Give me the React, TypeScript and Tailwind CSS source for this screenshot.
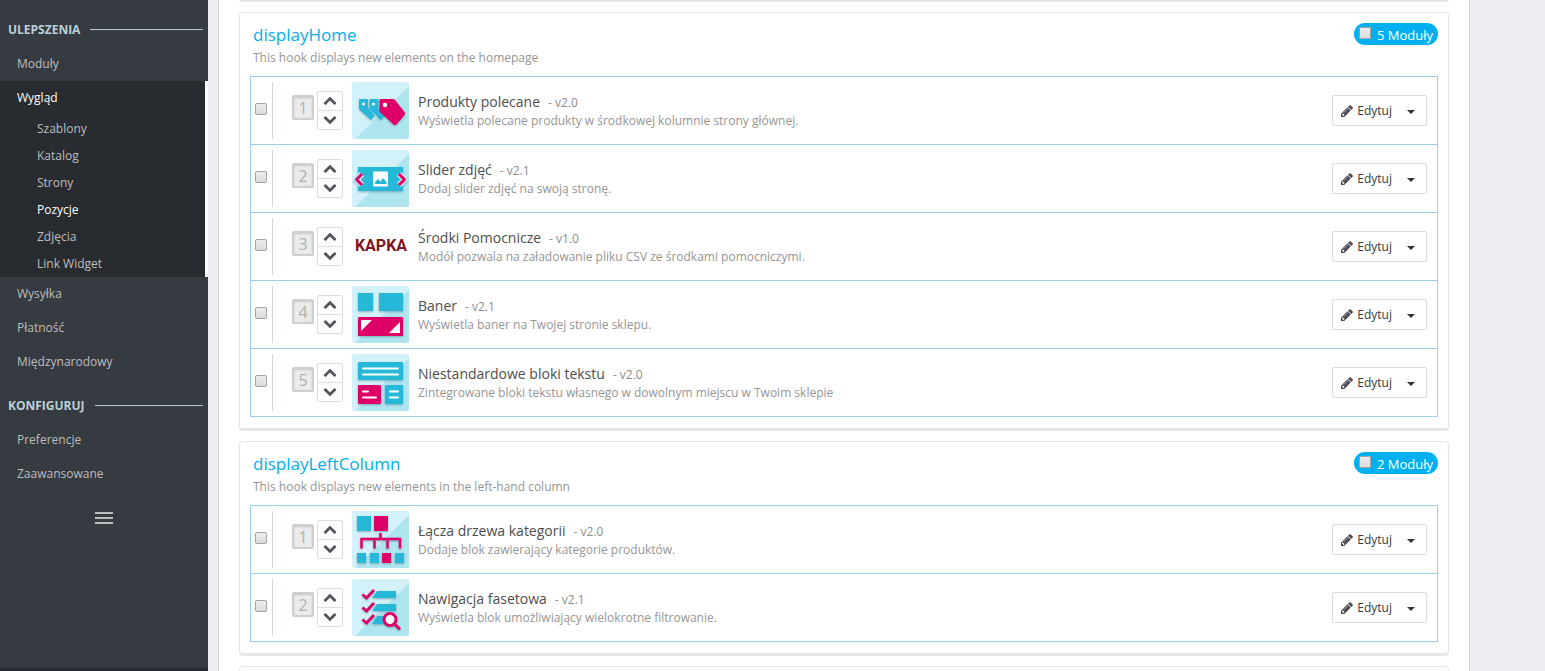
import { ReactNode } from "react";
import clsx from "clsx";

type IconName = "tags" | "slider" | "kapka" | "banner" | "blocks" | "tree" | "facets";

interface Module {
    name: string;
    version: string;
    description: string;
    icon: IconName;
}

interface Hook {
    name: string;
    description: string;
    modules: Module[];
}

const hooks: Hook[] = [
    {
        name: "displayHome",
        description: "This hook displays new elements on the homepage",
        modules: [
            {
                name: "Produkty polecane",
                version: "v2.0",
                description: "Wyświetla polecane produkty w środkowej kolumnie strony głównej.",
                icon: "tags",
            },
            {
                name: "Slider zdjęć",
                version: "v2.1",
                description: "Dodaj slider zdjęć na swoją stronę.",
                icon: "slider",
            },
            {
                name: "Środki Pomocnicze",
                version: "v1.0",
                description: "Modół pozwala na załadowanie pliku CSV ze środkami pomocniczymi.",
                icon: "kapka",
            },
            {
                name: "Baner",
                version: "v2.1",
                description: "Wyświetla baner na Twojej stronie sklepu.",
                icon: "banner",
            },
            {
                name: "Niestandardowe bloki tekstu",
                version: "v2.0",
                description: "Zintegrowane bloki tekstu własnego w dowolnym miejscu w Twoim sklepie",
                icon: "blocks",
            },
        ],
    },
    {
        name: "displayLeftColumn",
        description: "This hook displays new elements in the left-hand column",
        modules: [
            {
                name: "Łącza drzewa kategorii",
                version: "v2.0",
                description: "Dodaje blok zawierający kategorie produktów.",
                icon: "tree",
            },
            {
                name: "Nawigacja fasetowa",
                version: "v2.1",
                description: "Wyświetla blok umożliwiający wielokrotne filtrowanie.",
                icon: "facets",
            },
        ],
    },
];

const appearanceLinks = ["Szablony", "Katalog", "Strony", "Pozycje", "Zdjęcia", "Link Widget"];

const CYAN = "#25b9d7";
const PINK = "#df0067";

const iconArt: Record<Exclude<IconName, "kapka">, ReactNode> = {
    tags: (
        <>
            <g fill={CYAN}>
                <path d="M8 17h7q1 0 1 1v7.500l6.500 8-3.500 4.500L8 28q-1-1-1-2v-8q0-1 1-1z" />
                <path d="M18.500 17h7q1 0 1 1v7.500l6 8-3.500 4.500-10.500-10q-1-1-1-2v-8q0-1 1-1z" />
            </g>
            <path
                d="M29 17h12q1 0 2 1l9.500 12q1 2 0 3l-8 9.500q-2 1-3 0L29 31q-1.500-1-1.500-2V18q0-1 1.500-1z"
                fill={PINK}
            />
            <g fill="#fff">
                <circle cx="11.500" cy="22" r="1.500" />
                <circle cx="21.500" cy="22" r="1.500" />
                <circle cx="33" cy="23" r="2.200" />
            </g>
        </>
    ),
    slider: (
        <>
            <path
                d="M6 17h45v7q-4 0-4 3l3 2.500-3 2.500q0 3 4 3v6H6v-6q5 0 5-3l-3-2.500 3-2.500q0-3-5-3z"
                fill={CYAN}
            />
            <rect x="21" y="21.500" width="15" height="15" rx="1" fill="#fff" />
            <path d="M23 34v-2l3-3 2.500 2.500L31 28l3.500 4v2z" fill={CYAN} />
            <g fill="none" strokeLinejoin="round">
                <path d="M10 24l-5.500 5.500L10 35M47 24l5.500 5.500L47 35" stroke="#c5ecf5" strokeWidth="6" />
                <path d="M10 24l-5.500 5.500L10 35M47 24l5.500 5.500L47 35" stroke={PINK} strokeWidth="3" />
            </g>
        </>
    ),
    banner: (
        <>
            <path d="M6 7h15v18H6zM27 7h24v18H27z" fill={CYAN} />
            <rect x="6" y="31" width="45" height="19" rx="1" fill={PINK} />
            <path d="M9 34h11L9 45zM48 36v11H37z" fill="#fff" />
        </>
    ),
    blocks: (
        <>
            <rect x="6" y="8" width="45" height="18" rx="1" fill={CYAN} />
            <rect x="6" y="31" width="23" height="19" rx="1" fill={PINK} />
            <rect x="33" y="31" width="18" height="19" rx="1" fill={CYAN} />
            <path
                d="M11 14.500h35M11 20.500h35M11 37.500h5M11 43.500h13M38 37.500h8M38 43.500h8"
                stroke="#fff"
                strokeWidth="2"
                strokeLinecap="round"
            />
        </>
    ),
    tree: (
        <>
            <path d="M5 5h14v15H5zM5 42h9v10H5zM18 42h9v10h-9zM43 42h9v10h-9z" fill={CYAN} />
            <path d="M22 5h14v15H22zM30 42h9v10h-9z" fill={PINK} />
            <path
                d="M28.500 22v6M9.500 37.500V28H48v9.500M22.500 28v9.500M35.500 28v9.500"
                fill="none"
                stroke={PINK}
                strokeWidth="2.500"
            />
        </>
    ),
    facets: (
        <>
            <path d="M25 12h19v7H20zM25 25h19v7H20zM25 37h8v8H20z" fill={CYAN} />
            <path
                d="M10.500 15.500l4 3.500L22 11M10.500 28.500l4 3.500L22 24M10.500 40.500l4 3.500L22 36"
                fill="none"
                stroke={PINK}
                strokeWidth="2.800"
            />
            <circle cx="38" cy="40.500" r="6" fill="#fff" stroke={PINK} strokeWidth="3" />
            <path d="M42.500 45l5.500 5.500" stroke={PINK} strokeWidth="3" />
        </>
    ),
};

function ModuleIcon({ icon }: { icon: IconName }) {
    if (icon === "kapka") {
        return (
            <svg viewBox="0 0 57 57" className="size-[57px] shrink-0" role="img">
                <text
                    x="29"
                    y="33"
                    textAnchor="middle"
                    fontSize="16"
                    fontWeight="700"
                    fill="#7d1420"
                    fontFamily="Roboto, sans-serif">
                    KAPKA
                </text>
            </svg>
        );
    }
    return (
        <svg viewBox="0 0 57 57" className="size-[57px] shrink-0 rounded-xs" aria-hidden="true">
            <path d="M0 0h57v57H0z" fill="#d3f1f8" />
            <path d="M57 4v53H3z" fill="#afe5f1" />
            <g className="drop-shadow-[0_1px_1px_rgba(0,60,80,0.35)]">{iconArt[icon]}</g>
        </svg>
    );
}

function Chevron({ up }: { up?: boolean }) {
    return (
        <svg viewBox="0 0 1792 1792" className="mb-0.5 size-3.5 fill-[#54545c]" aria-hidden="true">
            {up ? (
                <path d="M1683 1331l-166 165q-19 19-45 19t-45-19l-531-531-531 531q-19 19-45 19t-45-19l-166-165q-19-19-19-45.500t19-45.500l742-741q19-19 45-19t45 19l742 741q19 19 19 45.500t-19 45.500z" />
            ) : (
                <path d="M1683 808l-742 741q-19 19-45 19t-45-19l-742-741q-19-19-19-45.500t19-45.500l166-165q19-19 45-19t45 19l531 531 531-531q19-19 45-19t45 19l166 165q19 19 19 45.500t-19 45.500z" />
            )}
        </svg>
    );
}

function PencilIcon() {
    return (
        <svg viewBox="0 0 1536 1536" className="size-3 fill-[#4a4a50]" aria-hidden="true">
            <path d="M363 1408l91-91-235-235-91 91v107h128v128h107zM886 480q0-22-22-22-10 0-17 7l-542 542q-7 7-7 17 0 22 22 22 10 0 17-7l542-542q7-7 7-17zM832 288l416 416-832 832h-416v-416zM1515 384q0 53-37 90l-166 166-416-416 166-165q36-38 90-38 53 0 91 38l235 234q37 39 37 91z" />
        </svg>
    );
}

function Checkbox({ label, className }: { label?: string; className?: string }) {
    return (
        <input
            type="checkbox"
            aria-label={label}
            className={clsx(
                "size-3 shrink-0 appearance-none border border-[#a3a3a3] bg-linear-to-b from-[#ededed] to-[#dcdcdc] checked:bg-[#00aff0]",
                className,
            )}
        />
    );
}

function ModuleRow({ module, position }: { module: Module; position: number }) {
    return (
        <li className="flex items-center border-b border-[#9ccfe8] py-[5px] pr-2.5 pl-1 last:border-b-0">
            <Checkbox label={module.name} className="mb-1 rounded-xs" />
            <div className="ml-[5px] flex min-w-0 flex-1 items-center border-l border-[#d3d8db]">
                <span className="mb-1.5 ml-[19px] flex h-[25px] w-[22px] shrink-0 items-center justify-center rounded-xs border-2 border-[#cfcfcf] bg-[#ebebeb] text-base leading-5 text-[#b0b0b0] shadow-[inset_0_1px_2px_rgba(0,0,0,0.15)]">
                    {position}
                </span>
                <div className="ml-[3px] flex w-[26px] shrink-0 flex-col divide-y divide-[#ddd] rounded-xs border border-[#ddd]">
                    <button
                        type="button"
                        aria-label="W górę"
                        className="flex h-[19px] items-center justify-center">
                        <Chevron up />
                    </button>
                    <button
                        type="button"
                        aria-label="W dół"
                        className="flex h-[18px] items-center justify-center">
                        <Chevron />
                    </button>
                </div>
                <div className="ml-[9px] shrink-0">
                    <ModuleIcon icon={module.icon} />
                </div>
                <div className="ml-[9px] min-w-0 flex-1">
                    <p className="text-sm leading-5 text-[#4e4e4e]">
                        {module.name}
                        <span className="ml-2 text-xs text-[#8d8d8d]">- {module.version}</span>
                    </p>
                    <p className="text-xs leading-[18px] text-[#959595]">{module.description}</p>
                </div>
                <div className="flex h-[31px] shrink-0 rounded-xs border border-[#ddd] bg-white text-xs text-[#363a41]">
                    <button type="button" className="flex items-center gap-1 pl-2">
                        <PencilIcon />
                        Edytuj
                    </button>
                    <button
                        type="button"
                        aria-label="Więcej"
                        className="flex items-center pr-[11px] pl-[15px]">
                        <svg viewBox="0 0 8 4" className="mt-0.5 h-1 w-2" aria-hidden="true">
                            <path d="M0 0h8L4 4z" fill="#333" />
                        </svg>
                    </button>
                </div>
            </div>
        </li>
    );
}

function HookCard({ hook }: { hook: Hook }) {
    return (
        <section className="shrink-0 rounded-sm border border-b-3 border-[#e6e6e6] bg-white px-2.5 pt-2.5 pb-[11px]">
            <header className="flex items-start justify-between pb-2 pl-[3px]">
                <div>
                    <h2 className="pb-0.5 text-[17px] leading-[23px] text-[#00aff0]">{hook.name}</h2>
                    <p className="text-xs leading-5 text-[#959595]">{hook.description}</p>
                </div>
                <label className="flex h-[22px] items-center rounded-full bg-[#00aff0] px-[5px] text-[13px] font-medium text-white">
                    <Checkbox className="mr-1.5 mb-0.5" />
                    <span className="pt-0.5 leading-5">{hook.modules.length} Moduły</span>
                </label>
            </header>
            <ul className="border border-[#9ccfe8]">
                {hook.modules.map((module, i) => (
                    <ModuleRow key={module.name} module={module} position={i + 1} />
                ))}
            </ul>
        </section>
    );
}

function NavHeading({ children }: { children: ReactNode }) {
    return (
        <h3 className="flex h-9 items-center gap-2.5 pr-[5px] pl-2 text-xs font-bold text-[#bcd1d6]">
            <span className="pt-0.5">{children}</span>
            <span className="h-px flex-1 bg-[#b6c8ce]" />
        </h3>
    );
}

function NavLink({ children, active }: { children: ReactNode; active?: boolean }) {
    return (
        <a
            href="#"
            className={clsx(
                "flex h-[34px] items-center pl-[17px]",
                active ? "text-white" : "text-[#bebebe]",
            )}>
            {children}
        </a>
    );
}

function Sidebar() {
    return (
        <nav className="flex w-52 shrink-0 flex-col border-b-3 border-[#282b30] bg-[#363a41] pt-[11px] text-xs">
            <NavHeading>ULEPSZENIA</NavHeading>
            <NavLink>Moduły</NavLink>
            <div className="border-r-3 border-white bg-[#282b30]">
                <NavLink active>Wygląd</NavLink>
                {appearanceLinks.map((link) => (
                    <a
                        key={link}
                        href="#"
                        className={clsx(
                            "flex h-[27px] items-center pl-[37px]",
                            link === "Pozycje" ? "text-white" : "text-[#bebebe]",
                        )}>
                        {link}
                    </a>
                ))}
            </div>
            <NavLink>Wysyłka</NavLink>
            <NavLink>Płatność</NavLink>
            <NavLink>Międzynarodowy</NavLink>
            <div className="mt-2">
                <NavHeading>KONFIGURUJ</NavHeading>
            </div>
            <NavLink>Preferencje</NavLink>
            <NavLink>Zaawansowane</NavLink>
            <button
                type="button"
                aria-label="Zwiń menu"
                className="mt-[21px] flex w-[18px] flex-col gap-[3px] self-center">
                <span className="h-0.5 w-full bg-[#bebebe]" />
                <span className="h-0.5 w-full bg-[#bebebe]" />
                <span className="h-0.5 w-full bg-[#bebebe]" />
            </button>
        </nav>
    );
}

export default function App() {
    return (
        <div className="flex h-screen overflow-hidden bg-[#eeeff2] font-['Open_Sans',sans-serif]">
            <Sidebar />
            <main className="mr-[75px] ml-2.5 flex min-w-0 flex-1 flex-col gap-2.5 overflow-hidden border-x border-[#d3d8db] bg-white px-5">
                <div className="h-0.5 shrink-0 rounded-b-sm bg-[#e6e6e6]" />
                {hooks.map((hook) => (
                    <HookCard key={hook.name} hook={hook} />
                ))}
                <div className="h-10 shrink-0 rounded-t-sm border border-[#e6e6e6]" />
            </main>
        </div>
    );
}
